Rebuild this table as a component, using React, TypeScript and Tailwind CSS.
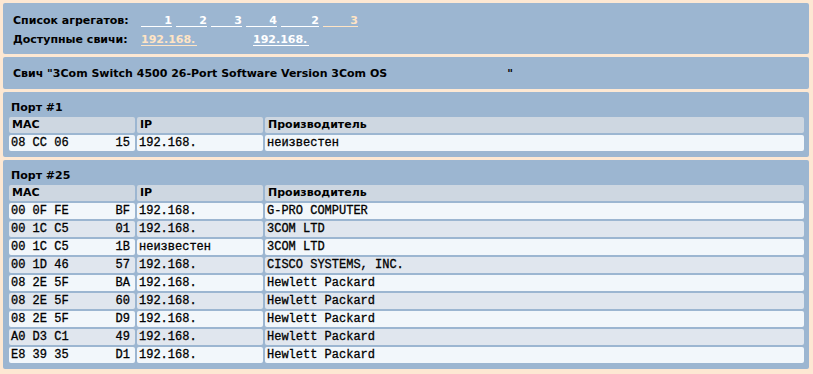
const sans = "font-['DejaVu_Sans',Verdana,sans-serif]";
const mono = "font-['Liberation_Mono','Courier_New',monospace]";

type Host = { mac1: string; mac2: string; ip: string; vendor: string };

const port1: Host[] = [{ mac1: '08 CC 06', mac2: '15', ip: '192.168.', vendor: 'неизвестен' }];

const port25: Host[] = [
  { mac1: '00 0F FE', mac2: 'BF', ip: '192.168.', vendor: 'G-PRO COMPUTER' },
  { mac1: '00 1C C5', mac2: '01', ip: '192.168.', vendor: '3COM LTD' },
  { mac1: '00 1C C5', mac2: '1B', ip: 'неизвестен', vendor: '3COM LTD' },
  { mac1: '00 1D 46', mac2: '57', ip: '192.168.', vendor: 'CISCO SYSTEMS, INC.' },
  { mac1: '08 2E 5F', mac2: 'BA', ip: '192.168.', vendor: 'Hewlett Packard' },
  { mac1: '08 2E 5F', mac2: '60', ip: '192.168.', vendor: 'Hewlett Packard' },
  { mac1: '08 2E 5F', mac2: 'D9', ip: '192.168.', vendor: 'Hewlett Packard' },
  { mac1: 'A0 D3 C1', mac2: '49', ip: '192.168.', vendor: 'Hewlett Packard' },
  { mac1: 'E8 39 35', mac2: 'D1', ip: '192.168.', vendor: 'Hewlett Packard' },
];

const aggregates = [
  { n: '1', w: 'w-[31px]', visited: false },
  { n: '2', w: 'w-[31px]', visited: false },
  { n: '3', w: 'w-[31px]', visited: false },
  { n: '4', w: 'w-[31px]', visited: false },
  { n: '2', w: 'w-[38px]', visited: false },
  { n: '3', w: 'w-[35px]', visited: true },
];

const PortPanel = ({ title, hosts }: { title: string; hosts: Host[] }) => (
  <div className="rounded-[2px] bg-[#9cb6d1] pb-[6px] pl-[6px] pr-[5px]">
    <div className="h-[25px] pl-[2px] pt-[6px] text-[11px] font-bold leading-[19px] text-black">{title}</div>
    <div className="grid grid-cols-[126px_126px_1fr] gap-[2px]">
      {/* header row */}
      <div className="h-[16px] rounded-[2px] bg-[#ced7e1] pl-[3px] text-[11px] font-bold leading-[16px] text-black">MAC</div>
      <div className="h-[16px] rounded-[2px] bg-[#ced7e1] pl-[3px] text-[11px] font-bold leading-[16px] text-black">IP</div>
      <div className="h-[16px] rounded-[2px] bg-[#ced7e1] pl-[3px] text-[11px] font-bold leading-[16px] text-black">Производитель</div>
      {hosts.map((h, i) => {
        const bg = i % 2 === 0 ? 'bg-[#f2f7fb]' : 'bg-[#e0e6ee]';
        return [
          <div key={`m${i}`} className={`${bg} ${mono} flex h-[16px] justify-between rounded-[2px] pl-[2px] pr-[5px] pt-[1px] text-[12px] leading-[15px] text-black [-webkit-text-stroke:0.3px_black]`}>
            <span className="whitespace-pre">{h.mac1}</span>
            <span>{h.mac2}</span>
          </div>,
          <div key={`i${i}`} className={`${bg} ${mono} h-[16px] rounded-[2px] pl-[2px] pt-[1px] text-[12px] leading-[15px] text-black [-webkit-text-stroke:0.3px_black]`}>{h.ip}</div>,
          <div key={`v${i}`} className={`${bg} ${mono} h-[16px] rounded-[2px] pl-[2px] pt-[1px] text-[12px] leading-[15px] text-black [-webkit-text-stroke:0.3px_black]`}>{h.vendor}</div>,
        ];
      })}
    </div>
  </div>
);

export default function App() {
  return (
    <div className={`${sans} min-h-[374px] w-[813px] bg-[#fde8d3] pl-[3px] pr-[4px] pt-[3px]`}>
      <div className="flex flex-col gap-[3px]">
        {/* aggregates & switches */}
        <div className="rounded-[2px] bg-[#9cb6d1] pb-[5px] pl-[10px] pt-[8px] text-[11px] font-bold leading-[19px] text-black">
          <div className="flex">
            <span className="w-[128px]">Список агрегатов:</span>
            <div className="flex gap-[4px]">
              {aggregates.map((a, i) => (
                <a
                  key={i}
                  href="#"
                  className={`${a.w} inline-block self-center border-b text-right leading-[11px] ${a.visited ? 'border-[#ffe4c4] text-[#ffe4c4]' : 'border-white text-white'}`}
                >
                  {a.n}
                </a>
              ))}
            </div>
          </div>
          <div className="flex">
            <span className="w-[128px]">Доступные свичи:</span>
            <div className="flex">
              <a href="#" className="inline-block w-[56px] self-center border-b border-[#ffe4c4] leading-[11px] text-[#ffe4c4]">192.168.</a>
              <a href="#" className="ml-[56px] inline-block w-[56px] self-center border-b border-white leading-[11px] text-white">192.168.</a>
            </div>
          </div>
        </div>

        {/* switch name */}
        <div className="flex rounded-[2px] bg-[#9cb6d1] pb-[6px] pl-[10px] pt-[7px] text-[11px] font-bold leading-[19px] text-black">
          <span className="whitespace-pre">Свич "3Com Switch 4500 26-Port Software Version 3Com OS</span>
          <span className="w-[120px]" />
          <span>"</span>
        </div>

        <PortPanel title="Порт #1" hosts={port1} />
        <PortPanel title="Порт #25" hosts={port25} />
      </div>
    </div>
  );
}
